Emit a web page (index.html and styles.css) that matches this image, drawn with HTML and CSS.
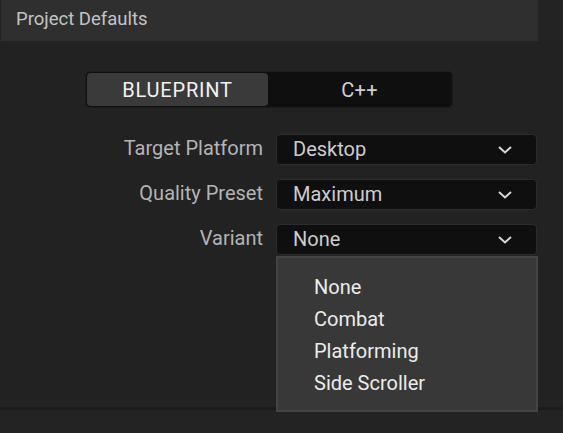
FILE: index.html
```html
<!DOCTYPE html>
<html>
<head>
<meta charset="utf-8">
<link rel="stylesheet" href="styles.css">
</head>
<body>
<div class="page">
  <div class="header">Project Defaults</div>
  <div class="content">
    <div class="segmented">
      <div class="seg active">BLUEPRINT</div>
      <div class="seg">C++</div>
    </div>
    <div class="form">
      <div class="row">
        <div class="label">Target Platform</div>
        <div class="select"><span>Desktop</span><svg class="chev" viewBox="0 0 14 8" width="14" height="8"><path d="M1 1 L7 6.5 L13 1" fill="none" stroke="#d8d8d8" stroke-width="2"/></svg></div>
      </div>
      <div class="row">
        <div class="label">Quality Preset</div>
        <div class="select"><span>Maximum</span><svg class="chev" viewBox="0 0 14 8" width="14" height="8"><path d="M1 1 L7 6.5 L13 1" fill="none" stroke="#d8d8d8" stroke-width="2"/></svg></div>
      </div>
      <div class="row">
        <div class="label">Variant</div>
        <div class="select-wrap">
          <div class="select"><span>None</span><svg class="chev" viewBox="0 0 14 8" width="14" height="8"><path d="M1 1 L7 6.5 L13 1" fill="none" stroke="#d8d8d8" stroke-width="2"/></svg></div>
          <div class="menu">
            <div class="item">None</div>
            <div class="item">Combat</div>
            <div class="item">Platforming</div>
            <div class="item">Side Scroller</div>
          </div>
        </div>
      </div>
    </div>
  </div>
  <div class="footer-line"></div>
</div>
</body>
</html>
```

FILE: styles.css
```css
* { box-sizing: border-box; }
html, body {
  margin: 0;
  padding: 0;
  background: #232323;
  font-family: Roboto, "Liberation Sans", sans-serif;
}
.page {
  width: 563px;
  height: 433px;
  position: relative;
  overflow: hidden;
}
.header {
  margin-left: 1px;
  width: 537px;
  height: 41px;
  background: #2f2f2f;
  color: #c4c4c4;
  font-size: 18.5px;
  padding-left: 15px;
  line-height: 38px;
}
.content {
  height: 366px;
  padding-top: 30px;
  background: #222222;
}
.segmented {
  margin-left: 85px;
  width: 368px;
  height: 37px;
  background: #0f0f0f;
  border: 1px solid #1c1c1c;
  border-radius: 5px;
  padding: 1px;
  display: flex;
}
.seg {
  flex: 1;
  display: flex;
  align-items: center;
  justify-content: center;
  color: #cfcfcf;
  font-size: 20px;
  letter-spacing: 0.3px;
  border-radius: 4px;
}
.seg.active {
  flex: 0 0 181px;
  background: #3a3a3a;
  color: #f2f2f2;
  letter-spacing: 0.8px;
}
.form {
  margin-top: 26px;
  display: flex;
  flex-direction: column;
  gap: 14px;
}
.row {
  display: flex;
  align-items: flex-start;
  height: 31px;
}
.label {
  width: 263px;
  text-align: right;
  color: #b4b4b4;
  font-size: 20px;
  line-height: 29px;
}
.select-wrap {
  margin-left: 13px;
  position: relative;
}
.row > .select { margin-left: 13px; }
.select {
  width: 261px;
  height: 31px;
  background: #0f0f0f;
  border: 1px solid #2c2c2c;
  border-radius: 4px;
  display: flex;
  align-items: center;
  justify-content: space-between;
  padding: 0 24px 2px 16px;
  color: #cdcdcd;
  font-size: 20px;
}
.chev { display: block; margin-top: 2px; }
.menu {
  position: absolute;
  left: 0;
  top: 32px;
  width: 262px;
  height: 156px;
  background: #383838;
  border: 2px solid #444444;
  padding: 13px 0 0 36px;
  z-index: 2;
}
.item {
  color: #ececec;
  font-size: 20px;
  line-height: 32px;
}
.footer-line {
  height: 3px;
  background: #1b1b1b;
}
```
